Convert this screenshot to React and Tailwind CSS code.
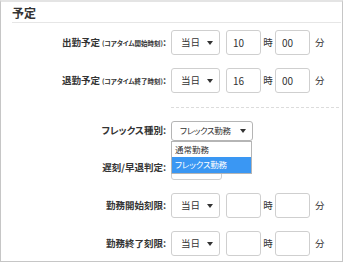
import React from 'react';

const Arrow = () => (
  <svg width="6" height="4" viewBox="0 0 6 4" className="shrink-0">
    <path d="M0 0h6L3 4z" fill="#333" />
  </svg>
);

const DaySelect = () => (
  <div className="flex items-center justify-between w-[49px] h-[25px] border border-[#cfcfcf] rounded-[3px] pl-[9px] pr-[6px] bg-white">
    <span className="text-[9.5px]">当日</span>
    <Arrow />
  </div>
);

const Box = ({ value }) => (
  <div className="flex items-center w-[35px] h-[25px] border border-[#cfcfcf] rounded-[3px] pl-[6px] text-[10px] bg-white">
    {value}
  </div>
);

function Label({ main, sub }) {
  return (
    <div className="w-[170px] shrink-0 pr-[5px] text-right font-bold text-[9.5px] whitespace-nowrap">
      {main}
      {sub && <span className="text-[6.5px] ml-[2px]">{sub}</span>}
      :
    </div>
  );
}

function TimeRow({ main, sub, hour, minute, className = '' }) {
  return (
    <div className={`flex items-center h-[25px] ${className}`}>
      <Label main={main} sub={sub} />
      <DaySelect />
      <div className="ml-[6px]">
        <Box value={hour} />
      </div>
      <span className="w-[14px] text-center text-[9.5px]">時</span>
      <Box value={minute} />
      <span className="ml-[5px] text-[9.5px]">分</span>
    </div>
  );
}

export default function App() {
  return (
    <div
      className="w-[343px] h-[262px] bg-white text-[#333] border-x border-b border-[#c6c6c6] border-t-2 border-t-[#e4e4e4] overflow-hidden [font-feature-settings:'palt']"
      style={{ fontFamily: '"Noto Sans CJK JP", "Noto Sans", sans-serif' }}
    >
      {/* Header */}
      <div className="ml-[11px] mr-[1px] pt-[2px] border-b border-[#e6e6e6]">
        <h2 className="text-[12px] font-bold leading-[18px]">予定</h2>
      </div>

      <TimeRow main="出勤予定" sub="(コアタイム開始時刻)" hour="10" minute="00" className="mt-[7px]" />
      <TimeRow main="退勤予定" sub="(コアタイム終了時刻)" hour="16" minute="00" className="mt-[13px]" />

      <div className="ml-[170px] mr-[3px] mt-[14px] border-t border-dashed border-[#dcdcdc]" />

      {/* Flex type */}
      <div className="flex items-center h-[25px] mt-[10px]">
        <Label main="フレックス種別" />
        <div className="relative">
          <div className="flex items-center justify-between w-[82px] h-[20px] border border-[#b5b5b5] rounded-[3px] pl-[8px] pr-[6px] bg-white">
            <span className="text-[8.5px] tracking-[-0.4px]">フレックス勤務</span>
            <Arrow />
          </div>
          <div className="absolute left-0 top-full w-[81px] border border-[#b5b5b5] bg-white z-10">
            <div className="h-[15px] flex items-center pl-[3px] text-[8.5px]">通常勤務</div>
            <div className="h-[16px] flex items-center pl-[3px] text-[8.5px] tracking-[-0.2px] bg-[#3a97f3] text-white">フレックス勤務</div>
          </div>
        </div>
      </div>

      <div className="flex items-center h-[25px] mt-[12px]">
        <Label main="遅刻/早退判定" />
        <div className="w-[51px] h-[25px] border border-[#cfcfcf] rounded-[3px]" />
      </div>

      <TimeRow main="勤務開始刻限" hour="" minute="" className="mt-[13px]" />
      <TimeRow main="勤務終了刻限" hour="" minute="" className="mt-[13px]" />
    </div>
  );
}
